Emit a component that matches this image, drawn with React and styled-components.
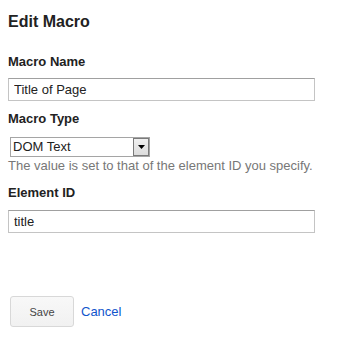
import React from "react";
import styled, { createGlobalStyle } from "styled-components";

const GlobalStyle = createGlobalStyle`
  body {
    margin: 0;
    background: #fff;
    font-family: Arial, "Liberation Sans", sans-serif;
    color: #222;
  }
`;

const Page = styled.form`
  padding: 12px 0 0 8px;
  width: 307px;
`;

const Title = styled.h2`
  margin: 0;
  font-size: 16px;
  line-height: 20px;
  font-weight: bold;
  color: #222;
`;

const Label = styled.label`
  display: block;
  margin-top: ${(p) => p.$top}px;
  font-size: 13px;
  line-height: 16px;
  font-weight: bold;
  color: #222;
`;

const TextInput = styled.input`
  display: block;
  box-sizing: border-box;
  width: 307px;
  height: 23px;
  margin: ${(p) => p.$top}px 0 0;
  padding: 0 5px;
  border: 1px solid #c4c4c4;
  border-top-color: #a0a0a0;
  border-radius: 0;
  font-family: Arial, "Liberation Sans", sans-serif;
  font-size: 13px;
  color: #222;
  outline: none;
`;

const SelectBox = styled.div`
  display: flex;
  align-items: center;
  box-sizing: border-box;
  width: 140px;
  height: 20px;
  margin: 10px 0 0 2px;
  border: 1px solid #a5a5a5;
  background: #fff;
  font-size: 13px;
  color: #222;
`;

const SelectValue = styled.span`
  flex: 1;
  padding-left: 2px;
  line-height: 18px;
`;

const ArrowButton = styled.span`
  display: flex;
  align-items: center;
  justify-content: center;
  box-sizing: border-box;
  width: 16px;
  height: 18px;
  margin-right: 0;
  border: 1px solid #7a7a7a;
  background: linear-gradient(#f0f0f0, #dcdcdc);
`;

const Hint = styled.p`
  margin: 1px 0 0;
  font-size: 13px;
  line-height: 16px;
  color: #777;
`;

const Actions = styled.div`
  display: flex;
  align-items: center;
  gap: 7px;
  margin: 63px 0 0 2px;
`;

const Button = styled.button`
  box-sizing: border-box;
  width: 64px;
  height: 31px;
  padding: 0;
  border: 1px solid #d8d8d8;
  border-radius: 3px;
  background: linear-gradient(#f8f8f8, #f1f1f1);
  font-family: Arial, "Liberation Sans", sans-serif;
  font-size: 11px;
  color: #444;
  cursor: pointer;
`;

const CancelLink = styled.a`
  font-size: 13px;
  color: #15c;
  text-decoration: none;
`;

export default function App() {
  return (
    <>
      <GlobalStyle />
      <Page onSubmit={(e) => e.preventDefault()}>
        <Title>Edit Macro</Title>
        <Label $top={22}>Macro Name</Label>
        <TextInput $top={8} defaultValue="Title of Page" />
        <Label $top={10}>Macro Type</Label>
        <SelectBox>
          <SelectValue>DOM Text</SelectValue>
          <ArrowButton>
            <svg width="7" height="4" viewBox="0 0 7 4">
              <path d="M0 0h7L3.5 4z" fill="#000" />
            </svg>
          </ArrowButton>
        </SelectBox>
        <Hint>The value is set to that of the element ID you specify.</Hint>
        <Label $top={11}>Element ID</Label>
        <TextInput $top={9} defaultValue="title" />
        <Actions>
          <Button type="button">Save</Button>
          <CancelLink href="#">Cancel</CancelLink>
        </Actions>
      </Page>
    </>
  );
}
